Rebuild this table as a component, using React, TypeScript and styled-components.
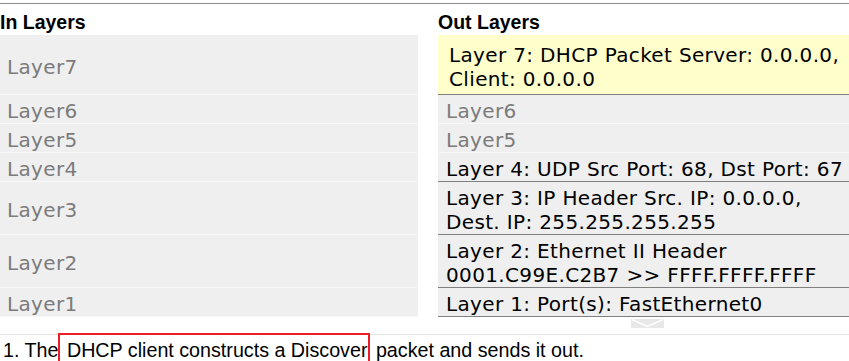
import styled, { createGlobalStyle } from "styled-components";

type LayerState = "current" | "active" | "idle";

interface LayerRow {
  inLabel: string;
  out: string[];
  state: LayerState;
}

const layers: LayerRow[] = [
  {
    inLabel: "Layer7",
    out: ["Layer 7: DHCP Packet Server: 0.0.0.0,", "Client: 0.0.0.0"],
    state: "current",
  },
  { inLabel: "Layer6", out: ["Layer6"], state: "idle" },
  { inLabel: "Layer5", out: ["Layer5"], state: "idle" },
  {
    inLabel: "Layer4",
    out: ["Layer 4: UDP Src Port: 68, Dst Port: 67"],
    state: "active",
  },
  {
    inLabel: "Layer3",
    out: ["Layer 3: IP Header Src. IP: 0.0.0.0,", "Dest. IP: 255.255.255.255"],
    state: "active",
  },
  {
    inLabel: "Layer2",
    out: ["Layer 2: Ethernet II Header", "0001.C99E.C2B7 >> FFFF.FFFF.FFFF"],
    state: "active",
  },
  { inLabel: "Layer1", out: ["Layer 1: Port(s): FastEthernet0"], state: "active" },
];

const GlobalStyle = createGlobalStyle`
  html, body {
    margin: 0;
    padding: 0;
    background: #fff;
    overflow: hidden;
  }
`;

const App = () => {
  return (
    <>
      <GlobalStyle />
      <Page>
        <TopRule />
        <LayerTable>
          <Heading>In Layers</Heading>
          <Heading>Out Layers</Heading>
          {layers.map((row) => (
            <>
              <InCell key={`in${row.inLabel}`}>{row.inLabel}</InCell>
              <OutCell key={`out${row.inLabel}`} $state={row.state}>
                {row.out.map((line, i) => (
                  <OutLine key={`line${i}`}>{line}</OutLine>
                ))}
              </OutCell>
            </>
          ))}
        </LayerTable>
        <ToggleRow>
          <Toggle>
            <svg width="33" height="9" viewBox="0 0 33 9">
              <rect width="33" height="9" fill="#e8e8e8" />
              <polyline
                points="1,0.5 16.5,7.5 32,0.5"
                fill="none"
                stroke="#ffffff"
                strokeWidth="1.4"
              />
            </svg>
          </Toggle>
        </ToggleRow>
        <Divider />
        <Step>
          1. The<Highlight> DHCP client constructs a Discover</Highlight> packet
          and sends it out.
        </Step>
      </Page>
    </>
  );
};
export default App;

const Page = styled.div`
  width: 857px;
  font-family: "Liberation Sans", Arial, sans-serif;
`;
const TopRule = styled.div`
  margin-top: 3px;
  height: 1px;
  background: #8a8a8a;
`;
const LayerTable = styled.div`
  display: grid;
  grid-template-columns: 418px 419px;
  column-gap: 20px;
`;
const Heading = styled.h3`
  margin: 0;
  padding: 6px 0 1px;
  font-family: "Liberation Sans", Arial, sans-serif;
  font-size: 19.5px;
  font-weight: 700;
  line-height: 24px;
  color: #000;
`;
const InCell = styled.div`
  display: flex;
  align-items: center;
  padding: 4px 7px 0;
  background: #efefef;
  border-bottom: 1px solid #f7f7f7;
  font-family: "DejaVu Sans", Verdana, sans-serif;
  font-size: 20px;
  letter-spacing: 0.35px;
  line-height: 24px;
  color: #7b7b7b;
`;
const OutCell = styled.div<{ $state: LayerState }>`
  padding: ${({ $state }) => ($state === "current" ? "8px 11px 3px" : "4px 8px 0")};
  background: ${({ $state }) => ($state === "current" ? "#ffffcc" : "#efefef")};
  border-bottom: 1px solid
    ${({ $state }) => ($state === "idle" ? "#f7f7f7" : "#808080")};
  font-family: "DejaVu Sans", Verdana, sans-serif;
  font-size: 20px;
  letter-spacing: 0.35px;
  line-height: 24px;
  color: ${({ $state }) => ($state === "idle" ? "#7b7b7b" : "#000")};
`;
const OutLine = styled.div`
  white-space: nowrap;
`;
const ToggleRow = styled.div`
  display: grid;
  grid-template-columns: 418px 419px;
  column-gap: 20px;
  margin-top: 2px;
`;
const Toggle = styled.div`
  grid-column: 2;
  justify-self: center;
  display: flex;
  svg {
    display: block;
  }
`;
const Divider = styled.div`
  margin-top: 6px;
  height: 1px;
  background: #e3e3e3;
`;
const Step = styled.p`
  margin: 0;
  padding: 4px 0 0 3px;
  font-size: 19.7px;
  line-height: 22px;
  color: #000;
  white-space: nowrap;
`;
const Highlight = styled.span`
  padding: 4px 1px 10px 1px;
  border: 2px solid #ee1c25;
`;
